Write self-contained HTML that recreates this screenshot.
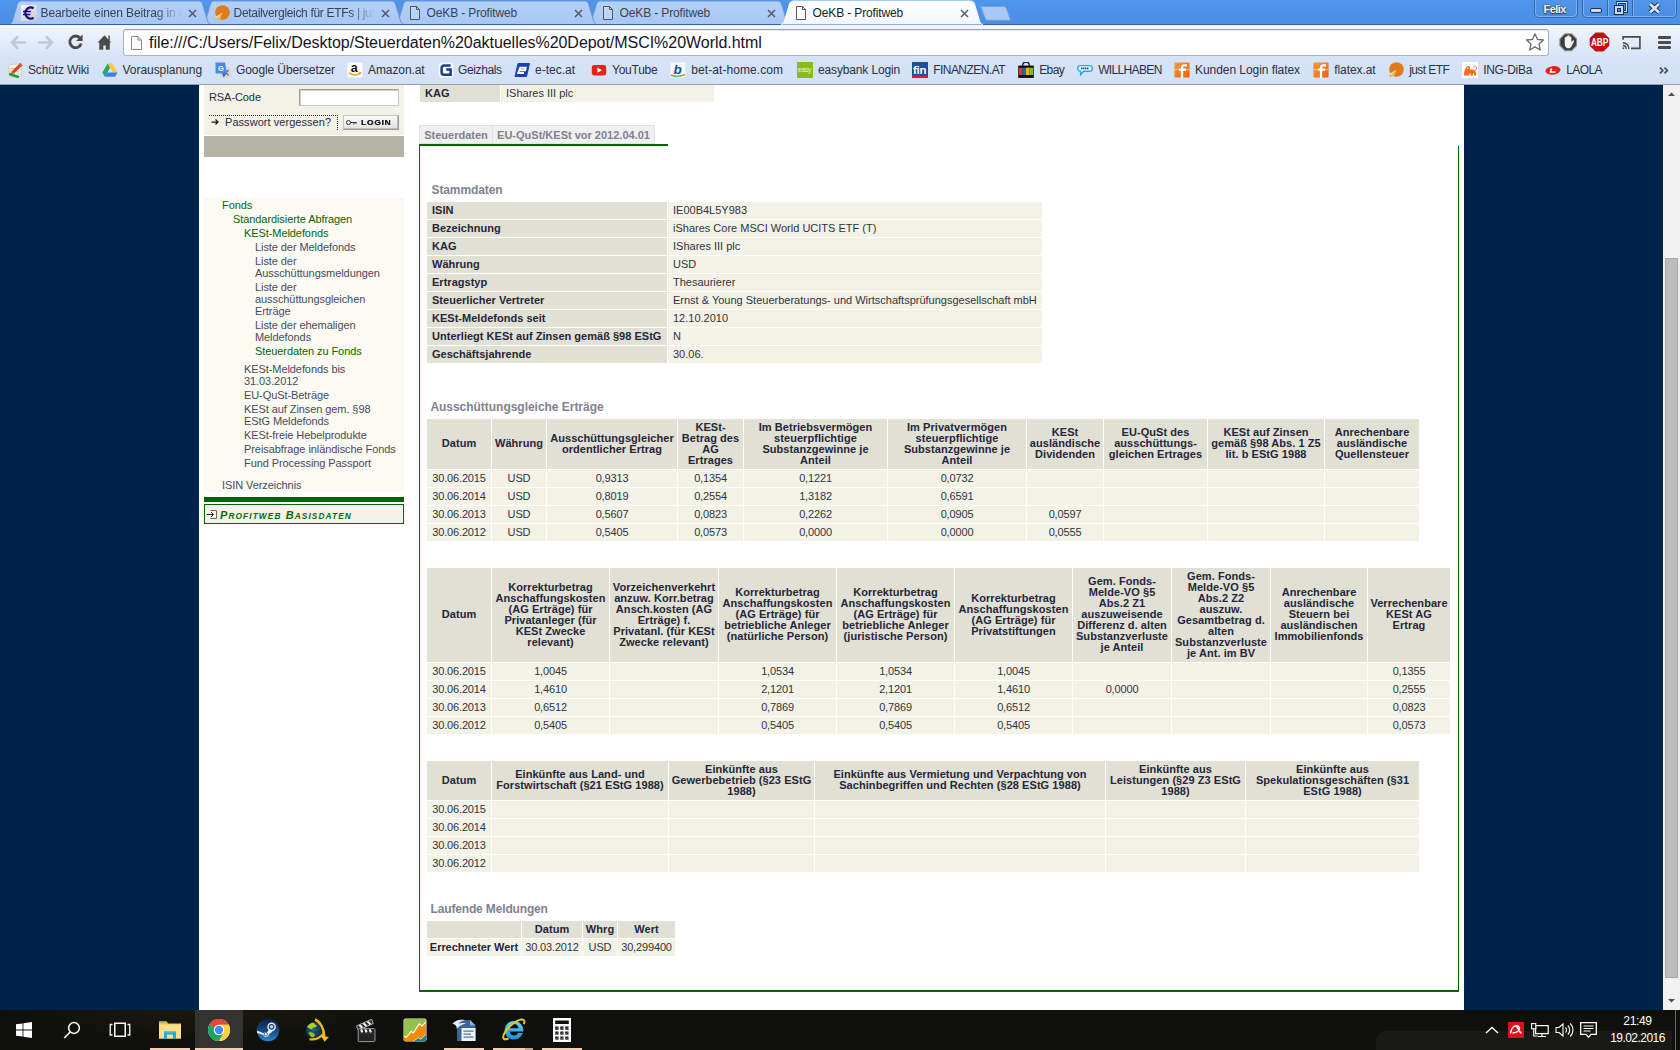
<!DOCTYPE html>
<html lang="de">
<head>
<meta charset="utf-8">
<title>OeKB - Profitweb</title>
<style>
*{box-sizing:border-box;margin:0;padding:0}
html,body{width:1680px;height:1050px;overflow:hidden;background:#00234b;font-family:"Liberation Sans",sans-serif;font-size:11px;color:#26263a}
.abs{position:absolute}
/* ---------- chrome frame ---------- */
#titlebar{position:absolute;left:0;top:0;width:1680px;height:25px;background:linear-gradient(#4f96ec,#4b8ee4)}
#toolbar{position:absolute;left:0;top:25px;width:1680px;height:33px;background:linear-gradient(#f4f8fe 0,#eef3fc 15%,#d6e3f7 100%)}
#bookbar{position:absolute;left:0;top:58px;width:1680px;height:26px;background:linear-gradient(#d6e3f7,#d3e1f6)}
#chromeline{position:absolute;left:0;top:84px;width:1680px;height:1px;background:#9a9da3}
.tab{position:absolute;top:0;height:25px;width:202px}
.tab svg{position:absolute;left:0;top:0}
.tab .tt{position:absolute;left:31.800px;top:6px;font-size:12px;color:#3c4048;white-space:nowrap;overflow:hidden;width:141px}
.tab .fav{position:absolute;left:12.200px;top:5px;width:16px;height:16px}
.tab .x{position:absolute;left:178.900px;top:9px;width:9px;height:9px}
.bm{position:absolute;top:62px;height:18px;font-size:12px;color:#2c3040;white-space:nowrap;letter-spacing:.12px}
.bm .ic{position:absolute;left:0;top:0;width:16px;height:16px}
.bm .tx{position:absolute;left:21px;top:1px}
/* ---------- page ---------- */
#page{position:absolute;left:199px;top:85px;width:1265px;height:925px;background:#fff;overflow:hidden}
#scroll{position:absolute;left:1663px;top:85px;width:17px;height:925px;background:#f1f1f1}
#thumb{position:absolute;left:2px;top:173px;width:13px;height:720px;background:#bcbcbc;border:1px solid #a8a8a8}
/* taskbar */
#taskbar{position:absolute;left:0;top:1010px;width:1680px;height:40px;background:#0f100c}
#pg{position:absolute;left:-199px;top:-85px;width:1680px;height:1050px}
.sc{font-size:8.300px}
.tabb{background:#f0f0f0;border:1px solid #e2e2e2;font-size:11px;font-weight:bold;color:#80808f;line-height:18px;text-align:center;white-space:nowrap}
table.t4 td b{letter-spacing:-.05px;color:#26263a}
.u{position:relative;top:-1px}
/* sidebar */
.sb{position:absolute;white-space:nowrap;font-size:11px;line-height:12px;letter-spacing:-.08px}
.g{color:#0a640a}
.d{color:#4a4a5c}
/* content tables */
table.t{position:absolute;border-collapse:separate;border-spacing:1px;table-layout:fixed}
table.t th{background:#e0e0d4;font-weight:bold;font-size:11px;line-height:11px;padding:3px 0;text-align:center;vertical-align:middle;color:#26263a;letter-spacing:.06px}
table.t td{background:#f2f2e6;font-size:11px;line-height:13px;height:17px;padding:0;text-align:center;vertical-align:middle;color:#33333f;white-space:nowrap;letter-spacing:-.15px}
.h2{position:absolute;font-size:12px;font-weight:bold;color:#82828f;white-space:nowrap;line-height:14px;letter-spacing:-.12px}
.kv{position:absolute;height:17px;line-height:17px;font-size:11px;white-space:nowrap;padding-left:5px}
.kv.k{background:#e0e0d4;font-weight:bold;color:#26263a;letter-spacing:.02px}
.kv.v{background:#f2f2e6;color:#33333f}
</style>
</head>
<body>
<svg width="0" height="0" style="position:absolute"><defs><linearGradient id="tgi" x1="0" y1="0" x2="0" y2="1"><stop offset="0" stop-color="#b4d1f8"/><stop offset="1" stop-color="#a6c7f4"/></linearGradient><linearGradient id="tga" x1="0" y1="0" x2="0" y2="1"><stop offset="0" stop-color="#ffffff"/><stop offset="1" stop-color="#f1f6fd"/></linearGradient></defs></svg>
<div id="titlebar"></div>
<div id="toolbar"></div>
<div id="bookbar"></div>
<div id="chromeline"></div>
<div class="abs" style="left:0;top:24px;width:1680px;height:1px;background:#2e62ac;z-index:7"></div>
<div class="tab" style="left:8.8px;z-index:5"><svg width="202" height="25" viewBox="0 0 202 25"><path d="M0,24.5 C2,24.2 2.800,23 3.500,20.800 L8.300,4.600 C9,2.200 10,1 12.400,1 L189.600,1 C192,1 193,2.200 193.700,4.600 L198.500,20.800 C199.200,23 200,24.200 202,24.500 Z" fill="url(#tgi)"/><path d="M0,24.5 C2,24.2 2.800,23 3.500,20.800 L8.300,4.600 C9,2.200 10,1 12.400,1 L189.600,1 C192,1 193,2.200 193.700,4.600 L198.500,20.800 C199.200,23 200,24.200 202,24.500" fill="none" stroke="#6a95d8" stroke-width="1"/></svg><svg class="fav" viewBox="0 0 16 16"><defs><linearGradient id="eg" x1="0" y1="0" x2="1" y2="1"><stop offset="0" stop-color="#f4f4f4"/><stop offset="1" stop-color="#c9c9c9"/></linearGradient></defs><rect width="16" height="16" fill="url(#eg)"/><path d="M12.6 3.4A5.2 5.6 0 1 0 12.6 12.6" fill="none" stroke="#1a0a8c" stroke-width="2.3"/><path d="M2 6.6h8M2 9.4h7.4" stroke="#1a0a8c" stroke-width="1.5"/></svg><div class="tt" style="color:#3b4150;letter-spacing:-0.118px;-webkit-mask-image:linear-gradient(90deg,#000 82%,transparent 100%);mask-image:linear-gradient(90deg,#000 82%,transparent 100%)">Bearbeite einen Beitrag in d</div><svg class="x" viewBox="0 0 9 9"><path d="M1 1l7 7M8 1l-7 7" stroke="#545a66" stroke-width="1.500" fill="none"/></svg></div>
<div class="tab" style="left:201.8px;z-index:4"><svg width="202" height="25" viewBox="0 0 202 25"><path d="M0,24.5 C2,24.2 2.800,23 3.500,20.800 L8.300,4.600 C9,2.200 10,1 12.400,1 L189.600,1 C192,1 193,2.200 193.700,4.600 L198.500,20.800 C199.200,23 200,24.200 202,24.500 Z" fill="url(#tgi)"/><path d="M0,24.5 C2,24.2 2.800,23 3.500,20.800 L8.300,4.600 C9,2.200 10,1 12.400,1 L189.600,1 C192,1 193,2.200 193.700,4.600 L198.500,20.800 C199.200,23 200,24.200 202,24.500" fill="none" stroke="#6a95d8" stroke-width="1"/></svg><svg class="fav" viewBox="0 0 16 16"><circle cx="8.5" cy="7.5" r="7.3" fill="#e07b1a"/><path d="M8.5 7.5L1 13.2L2.2 15.2L6.5 13.5Z" fill="#f6b93a"/><path d="M8.5 7.5L0.6 12.6L3.4 12.4Z" fill="#d7e6f9"/></svg><div class="tt" style="color:#3b4150;letter-spacing:-0.323px;-webkit-mask-image:linear-gradient(90deg,#000 82%,transparent 100%);mask-image:linear-gradient(90deg,#000 82%,transparent 100%)">Detailvergleich für ETFs | jus</div><svg class="x" viewBox="0 0 9 9"><path d="M1 1l7 7M8 1l-7 7" stroke="#545a66" stroke-width="1.500" fill="none"/></svg></div>
<div class="tab" style="left:394.8px;z-index:3"><svg width="202" height="25" viewBox="0 0 202 25"><path d="M0,24.5 C2,24.2 2.800,23 3.500,20.800 L8.300,4.600 C9,2.200 10,1 12.400,1 L189.600,1 C192,1 193,2.200 193.700,4.600 L198.500,20.800 C199.200,23 200,24.200 202,24.500 Z" fill="url(#tgi)"/><path d="M0,24.5 C2,24.2 2.800,23 3.500,20.800 L8.300,4.600 C9,2.200 10,1 12.400,1 L189.600,1 C192,1 193,2.200 193.700,4.600 L198.500,20.800 C199.200,23 200,24.200 202,24.500" fill="none" stroke="#6a95d8" stroke-width="1"/></svg><svg class="fav" viewBox="0 0 16 16"><path d="M3.500 1.500h6l3 3v10h-9z" fill="rgba(255,255,255,.18)" stroke="#555" stroke-width="1"/><path d="M9.500 1.500v3h3" fill="none" stroke="#555" stroke-width="1"/></svg><div class="tt" style="color:#3b4150;letter-spacing:-0.142px">OeKB - Profitweb</div><svg class="x" viewBox="0 0 9 9"><path d="M1 1l7 7M8 1l-7 7" stroke="#545a66" stroke-width="1.500" fill="none"/></svg></div>
<div class="tab" style="left:587.8px;z-index:2"><svg width="202" height="25" viewBox="0 0 202 25"><path d="M0,24.5 C2,24.2 2.800,23 3.500,20.800 L8.300,4.600 C9,2.200 10,1 12.400,1 L189.600,1 C192,1 193,2.200 193.700,4.600 L198.500,20.800 C199.200,23 200,24.200 202,24.500 Z" fill="url(#tgi)"/><path d="M0,24.5 C2,24.2 2.800,23 3.500,20.800 L8.300,4.600 C9,2.200 10,1 12.400,1 L189.600,1 C192,1 193,2.200 193.700,4.600 L198.500,20.800 C199.200,23 200,24.200 202,24.500" fill="none" stroke="#6a95d8" stroke-width="1"/></svg><svg class="fav" viewBox="0 0 16 16"><path d="M3.500 1.500h6l3 3v10h-9z" fill="rgba(255,255,255,.18)" stroke="#555" stroke-width="1"/><path d="M9.500 1.500v3h3" fill="none" stroke="#555" stroke-width="1"/></svg><div class="tt" style="color:#3b4150;letter-spacing:-0.142px">OeKB - Profitweb</div><svg class="x" viewBox="0 0 9 9"><path d="M1 1l7 7M8 1l-7 7" stroke="#545a66" stroke-width="1.500" fill="none"/></svg></div>
<div class="tab" style="left:780.8px;z-index:9"><svg width="202" height="25" viewBox="0 0 202 25"><path d="M0,24.5 C2,24.2 2.800,23 3.500,20.800 L8.300,4.600 C9,2.200 10,1 12.400,1 L189.600,1 C192,1 193,2.200 193.700,4.600 L198.500,20.800 C199.200,23 200,24.200 202,24.500 Z" fill="url(#tga)"/><path d="M0,24.5 C2,24.2 2.800,23 3.500,20.800 L8.300,4.600 C9,2.200 10,1 12.400,1 L189.600,1 C192,1 193,2.200 193.700,4.600 L198.500,20.800 C199.200,23 200,24.200 202,24.500" fill="none" stroke="#f8fbff" stroke-width="1"/></svg><svg class="fav" viewBox="0 0 16 16"><path d="M3.500 1.500h6l3 3v10h-9z" fill="#fff" stroke="#555" stroke-width="1"/><path d="M9.500 1.500v3h3" fill="none" stroke="#555" stroke-width="1"/></svg><div class="tt" style="color:#1c1c1c;letter-spacing:-0.142px">OeKB - Profitweb</div><svg class="x" viewBox="0 0 9 9"><path d="M1 1l7 7M8 1l-7 7" stroke="#545a66" stroke-width="1.500" fill="none"/></svg></div>
<svg class="abs" style="left:979px;top:5px;z-index:3" width="34" height="17" viewBox="0 0 34 17"><path d="M1.500 1.500H24.500c1.600 0 2.400.600 3 2.200L31.500 15.300H9c-1.600 0-2.400-.600-3-2.200z" fill="#a9c9f5" stroke="#6f9fe0" stroke-width="1"/></svg>
<div class="abs" style="left:1535px;top:-1px;width:42px;height:18px;border:1px solid #7db0ee;border-radius:0 0 4px 4px;background:linear-gradient(#5397ec,#4a8fe4);box-shadow:0 0 0 1px #3367ad"></div>
<div class="abs" style="left:1543.5px;top:3px;font-size:11px;line-height:12px;font-weight:bold;color:#f4f4f4;text-shadow:0 0 2px #222,0 1px 1px #333;letter-spacing:-.55px">Felix</div>
<div class="abs" style="left:1583px;top:-1px;width:93px;height:18px;border:1px solid #7db0ee;border-radius:0 0 4px 4px;background:linear-gradient(#5397ec,#4a8fe4);box-shadow:0 0 0 1px #3367ad"></div>
<div class="abs" style="left:1608px;top:0;width:1px;height:16px;background:#7db0ee;box-shadow:-1px 0 0 #3367ad"></div>
<div class="abs" style="left:1633px;top:0;width:1px;height:16px;background:#7db0ee;box-shadow:-1px 0 0 #3367ad"></div>
<svg class="abs" style="left:1589px;top:7px" width="14" height="7" viewBox="0 0 14 7"><rect x="1.500" y="1.500" width="11" height="4" rx="1.500" fill="#c5dbf8" stroke="#22324e" stroke-width="1"/></svg>
<svg class="abs" style="left:1613px;top:1px" width="15" height="15" viewBox="0 0 15 15"><path d="M4.500 4.500V1.500h9v9h-3" fill="none" stroke="#22324e" stroke-width="3"/><path d="M4.500 4.500V1.500h9v9h-3" fill="none" stroke="#c5dbf8" stroke-width="1.200"/><rect x="1.500" y="4.500" width="9" height="9" fill="#c5dbf8" stroke="#22324e" stroke-width="1"/><rect x="4.500" y="7.500" width="3" height="3" fill="#4a8fe2" stroke="#22324e" stroke-width="1"/></svg>
<svg class="abs" style="left:1648px;top:2px" width="13" height="12" viewBox="0 0 13 12"><path d="M2 2l9 8.500M11 2l-9 8.500" stroke="#22324e" stroke-width="4.600" fill="none"/><path d="M2 2l9 8.500M11 2l-9 8.500" stroke="#d2e3fa" stroke-width="2.700" fill="none"/></svg>
<svg class="abs" style="left:9px;top:34px" width="18" height="16" viewBox="0 0 18 16"><path d="M8.300 3L3 8.500l5.300 5.500M3.500 8.500H15.500" fill="none" stroke="#c2c9d6" stroke-width="2.600" stroke-linecap="round" stroke-linejoin="round"/></svg>
<svg class="abs" style="left:37px;top:34px" width="18" height="16" viewBox="0 0 18 16"><path d="M9.700 3L15 8.500l-5.300 5.500M14.500 8.500H2.500" fill="none" stroke="#c2c9d6" stroke-width="2.600" stroke-linecap="round" stroke-linejoin="round"/></svg>
<svg class="abs" style="left:67px;top:34px" width="17" height="16" viewBox="0 0 17 16"><path d="M13.200 4.200A5.800 5.800 0 1 0 14.200 9.500" fill="none" stroke="#4b4b4b" stroke-width="2.800"/><path d="M9 7h6.600V0.400z" fill="#4b4b4b"/></svg>
<svg class="abs" style="left:97px;top:35px" width="15" height="15" viewBox="0 0 15 15"><path d="M7.500 0.300L0.600 7.600H2.300V14.800H6.300V10.400H8.800V14.800H12.800V7.600H14.400L12.800 5.900V0.600H11.400V4.400z" fill="#4b4b4b"/></svg>
<div class="abs" style="left:123px;top:29px;width:1426px;height:27px;background:#fff;border:1px solid #a9b3c3;border-top-color:#9aa3b3;border-radius:3px;box-shadow:inset 0 1px 1px #e4e7ec"></div>
<svg class="abs" style="left:130px;top:35px" width="13" height="16" viewBox="0 0 13 16"><path d="M1.500 1.500h6.500l3.500 3.500v9.500h-10z" fill="#fbfbfb" stroke="#8a8a8a" stroke-width="1"/><path d="M8 1.500v3.500h3.500" fill="#e4e4e4" stroke="#8a8a8a" stroke-width="1"/></svg>
<div class="abs" id="url" style="left:149px;top:33px;font-size:16px;line-height:19px;color:#14141e;white-space:nowrap;letter-spacing:-.04px">file:///C:/Users/Felix/Desktop/Steuerdaten%20aktuelles%20Depot/MSCI%20World.html</div>
<svg class="abs" style="left:1525px;top:32px" width="20" height="20" viewBox="0 0 20 20"><path d="M10 1.800l2.500 5.600 6 .600-4.500 4 1.300 6L10 14.900 4.700 18l1.300-6-4.500-4 6-.600z" fill="#fff" stroke="#6a6a6a" stroke-width="1.300" stroke-linejoin="round"/></svg>
<svg class="abs" style="left:1558.500px;top:33px" width="18.500" height="18.500" viewBox="0 0 20 20"><path d="M6.400 1h7.200l5.400 5.400v7.200l-5.400 5.400H6.400l-5.400-5.400V6.400z" fill="#3c3c3c" stroke="#8c8c8c" stroke-width="1.200"/><path d="M6.200 10.500V5.200a.9.900 0 0 1 1.800 0V4a.9.900 0 0 1 1.800 0v-.6a.9.900 0 0 1 1.800 0V4.600a.9.900 0 0 1 1.800 0V10l1.200-1.600a.9.900 0 0 1 1.500 1L13.400 14.500c-.8 1.300-1.800 2-3.400 2-2.400 0-3.800-1.800-3.800-4z" fill="#f2f2f2"/></svg>
<svg class="abs" style="left:1589px;top:32px" width="21" height="20" viewBox="0 0 21 20"><path d="M6.500 0.500h8l5.800 5.800v7.400l-5.800 5.800h-8L0.700 13.700V6.300z" fill="#c70d14"/><text transform="translate(10.500 13.700) scale(.8 1)" text-anchor="middle" font-family="Liberation Sans" font-weight="bold" font-size="10.400" fill="#fff" letter-spacing="-0.2">ABP</text></svg>
<svg class="abs" style="left:1622px;top:35.500px" width="19" height="14" viewBox="0 0 21 15" preserveAspectRatio="none"><path d="M1.200 4V1h18.600v12.200H10" fill="none" stroke="#4b4b4b" stroke-width="1.800"/><path d="M1 7.200a6.600 6.600 0 0 1 6.600 6.600M1 10.200a3.600 3.600 0 0 1 3.600 3.600" fill="none" stroke="#4b4b4b" stroke-width="1.500"/><rect x="0.600" y="12.200" width="1.800" height="1.800" fill="#4b4b4b"/></svg>
<div class="abs" style="left:1658px;top:36px;width:13px;height:3px;background:#4b4b4b;border-radius:1px;box-shadow:0 5px 0 #4b4b4b,0 10px 0 #4b4b4b"></div>
<div class="bm" style="left:7px"><span class="ic"><svg width="16" height="16" viewBox="0 0 16 16"><path d="M1.500 3.500c2-1.500 9-2 12.500-.500l.500 11c-3.500 1.500-9 1.500-12 .5z" fill="#f3efe2" stroke="#cfc8b4" stroke-width=".9"/><path d="M3 6.500h5M3 8.800h3.500M9.500 9.500l3 .5M10 12l2.500.3" stroke="#9ccf9c" stroke-width=".8"/><path d="M4.800 9.200L13.300 1l2.200 2.200L7 11.400z" fill="#d8402a"/><path d="M13.300 1l2.200 2.200-1.200 1.100-2.200-2.200z" fill="#c9761f"/><path d="M4.800 9.200L3.600 12.200 7 11.400z" fill="#e8452f"/><path d="M3.300 12.200l7.400 2.600" stroke="#1fa031" stroke-width="2.600" stroke-linecap="round"/></svg></span><span class="tx" style="left:21px;letter-spacing:-0.152px">Schütz Wiki</span></div>
<div class="bm" style="left:102px"><span class="ic"><svg width="16" height="16" viewBox="0 0 16 16"><path d="M5.6 1.5h4.8L15.6 10.5h-4.8z" fill="#f9c941"/><path d="M5.6 1.5L0.4 10.5l2.4 4.2L8 5.7z" fill="#2ba563"/><path d="M5.2 10.5h10.4l-2.4 4.2H2.8z" fill="#3f7fe6"/></svg></span><span class="tx" style="left:20.5px;letter-spacing:-0.043px">Vorausplanung</span></div>
<div class="bm" style="left:215px"><span class="ic"><svg width="16" height="16" viewBox="0 0 16 16"><rect x="6" y="5" width="10" height="11" rx="1" fill="#d9d9d9"/><path d="M9 8l4.5 5.5M13.5 8L9 13.5" stroke="#6a6a6a" stroke-width="1.2"/><path d="M0.5 0.5h9.5l2 11H1.5a1 1 0 0 1-1-1z" fill="#4a86ee"/><path d="M11 11.5l-2.2 4L7 11.5z" fill="#2f63c0"/><text x="3" y="8.8" font-family="Liberation Sans" font-weight="bold" font-size="7.5" fill="#fff">G</text></svg></span><span class="tx" style="left:21px;letter-spacing:-0.1px">Google Übersetzer</span></div>
<div class="bm" style="left:347px"><span class="ic"><svg width="16" height="16" viewBox="0 0 16 16"><rect x="0.5" y="0.5" width="15" height="15" rx="2.5" fill="#fff"/><text x="3.800" y="9.800" font-family="Liberation Sans" font-weight="bold" font-size="12.500" fill="#141414">a</text><path d="M1.800 10.800Q8 15.200 13.400 11.200" fill="none" stroke="#f79a1c" stroke-width="1.500"/><path d="M14.400 10l-2.800.3 2.400 2.200z" fill="#f79a1c"/></svg></span><span class="tx" style="left:21px;letter-spacing:-0.094px">Amazon.at</span></div>
<div class="bm" style="left:438px"><span class="ic"><svg width="16" height="16" viewBox="0 0 16 16"><rect x="0.5" y="0.5" width="15" height="15" rx="3.5" fill="#f4f7fc"/><path d="M12.6 3.4H6.2a2.6 2.6 0 0 0-2.6 2.6v4.2a2.6 2.6 0 0 0 2.6 2.6h6.4V7.4H8.2" fill="none" stroke="#1c3f86" stroke-width="2.5"/></svg></span><span class="tx" style="left:20px;letter-spacing:-0.373px">Geizhals</span></div>
<div class="bm" style="left:514px"><span class="ic"><svg width="16" height="16" viewBox="0 0 16 16"><path d="M4 1.5h11.5l-3 13H1z" fill="#1f3fb0" stroke="#1f3fb0" stroke-width="1" stroke-linejoin="round"/><path d="M4.6 8.2h6.6l.5-2.4H6.2L4.2 11h5.8" fill="none" stroke="#fff" stroke-width="1.9"/></svg></span><span class="tx" style="left:21px;letter-spacing:0.0px">e-tec.at</span></div>
<div class="bm" style="left:591px"><span class="ic"><svg width="16" height="16" viewBox="0 0 16 16"><rect x="0.8" y="3" width="14.4" height="10.4" rx="2.6" fill="#e62117"/><path d="M6.4 5.6v5.2L11 8.2z" fill="#fff"/></svg></span><span class="tx" style="left:21px;letter-spacing:-0.237px">YouTube</span></div>
<div class="bm" style="left:670px"><span class="ic"><svg width="16" height="16" viewBox="0 0 16 16"><rect x="0.5" y="0.5" width="15" height="15" rx="1" fill="#f7f7f5"/><text x="3.6" y="11.6" font-family="Liberation Sans" font-weight="bold" font-style="italic" font-size="13.5" fill="#17518f">b</text><path d="M1 13.2Q8 15.8 15 12.6" fill="none" stroke="#5aa82e" stroke-width="1.3"/></svg></span><span class="tx" style="left:21.200000000000045px;letter-spacing:0.087px">bet-at-home.com</span></div>
<div class="bm" style="left:797px"><span class="ic"><svg width="16" height="16" viewBox="0 0 16 16"><rect x="0" y="0" width="16" height="16" fill="#86bc1f"/><text x="1.1" y="9.6" font-family="Liberation Sans" font-size="6.6" fill="#f2fbdc" letter-spacing="-0.2">easy</text></svg></span><span class="tx" style="left:21px;letter-spacing:-0.146px">easybank Login</span></div>
<div class="bm" style="left:912px"><span class="ic"><svg width="16" height="16" viewBox="0 0 16 16"><rect x="0" y="0" width="16" height="16" fill="#1d4c9a"/><rect x="0" y="13.3" width="16" height="2.7" fill="#d3202c"/><text x="1" y="11.6" font-family="Liberation Sans" font-weight="bold" font-size="11.5" fill="#fff" letter-spacing="-0.3">fin</text></svg></span><span class="tx" style="left:21.200000000000045px;letter-spacing:-0.542px">FINANZEN.AT</span></div>
<div class="bm" style="left:1018px"><span class="ic"><svg width="16" height="16" viewBox="0 0 16 16"><path d="M4.700 4V3.400a3.300 3.300 0 0 1 6.600 0V4" fill="none" stroke="#141414" stroke-width="1.300"/><rect x="0.200" y="3.600" width="15.600" height="12.300" fill="#0c0c0c"/><rect x="0.800" y="5.700" width="3.600" height="7.300" fill="#e5332a"/><rect x="4.400" y="5.700" width="3.600" height="7.300" fill="#1c62d4"/><rect x="8" y="5.700" width="3.600" height="7.300" fill="#f9b218"/><rect x="11.600" y="5.700" width="3.600" height="7.300" fill="#82ba2a"/></svg></span><span class="tx" style="left:21.200000000000045px;letter-spacing:-0.586px">Ebay</span></div>
<div class="bm" style="left:1077px"><span class="ic"><svg width="16" height="16" viewBox="0 0 16 16"><path d="M3.4 3.6h9.2a2.6 2.6 0 0 1 0 5.6H6.6L3.6 12.6V9.2H3.4a2.6 2.6 0 0 1 0-5.6z" fill="#f2f8fd" stroke="#2aa6e2" stroke-width="1.4"/><path d="M4 6.4h8" stroke="#2a3f86" stroke-width="1.7" stroke-dasharray="1.4 .5"/></svg></span><span class="tx" style="left:21.200000000000045px;letter-spacing:-0.649px">WILLHABEN</span></div>
<div class="bm" style="left:1174px"><span class="ic"><svg width="16" height="16" viewBox="0 0 16 16"><defs><linearGradient id="fx" x1="0" y1="0" x2="1" y2="1"><stop offset="0" stop-color="#f79a3c"/><stop offset="1" stop-color="#ef5d10"/></linearGradient></defs><rect x="0.4" y="0.4" width="15.2" height="15.2" rx="1" fill="url(#fx)"/><path d="M0.6 7.6H15" stroke="#fbd3a8" stroke-width=".8"/><path d="M13 3.4H10a2 2 0 0 0-2 2V16M5 7.6h7" fill="none" stroke="#fff" stroke-width="2.3"/></svg></span><span class="tx" style="left:21px;letter-spacing:-0.055px">Kunden Login flatex</span></div>
<div class="bm" style="left:1313px"><span class="ic"><svg width="16" height="16" viewBox="0 0 16 16"><defs><linearGradient id="fx" x1="0" y1="0" x2="1" y2="1"><stop offset="0" stop-color="#f79a3c"/><stop offset="1" stop-color="#ef5d10"/></linearGradient></defs><rect x="0.4" y="0.4" width="15.2" height="15.2" rx="1" fill="url(#fx)"/><path d="M0.6 7.6H15" stroke="#fbd3a8" stroke-width=".8"/><path d="M13 3.4H10a2 2 0 0 0-2 2V16M5 7.6h7" fill="none" stroke="#fff" stroke-width="2.3"/></svg></span><span class="tx" style="left:21.200000000000045px;letter-spacing:-0.078px">flatex.at</span></div>
<div class="bm" style="left:1387.5px"><span class="ic"><svg class="" viewBox="0 0 16 16"><circle cx="8.5" cy="7.5" r="7.3" fill="#e07b1a"/><path d="M8.5 7.5L1 13.2L2.2 15.2L6.5 13.5Z" fill="#f6b93a"/><path d="M8.5 7.5L0.6 12.6L3.4 12.4Z" fill="#d7e6f9"/></svg></span><span class="tx" style="left:21.700000000000045px;letter-spacing:-0.582px">just ETF</span></div>
<div class="bm" style="left:1462px"><span class="ic"><svg width="16" height="16" viewBox="0 0 16 16"><rect width="16" height="16" fill="#fff"/><path d="M2 13.6c0-3 .4-5.2 1.4-6.8C4 5 5.6 3.6 7 4.2c1.4.6 1.4 2.4.8 3.4 1.6-.4 3.8-.2 5 .8 1.2 1 1.6 3 1.4 5.2h-2.2c.2-1.2 0-2.2-.6-2.8-.4 1-.6 1.800-.6 2.800H8.600c0-1.200-.2-2-.8-2.600-.4.800-.6 1.600-.6 2.600z" fill="#f36f1c"/><path d="M11.600 4.200c1.400-.4 2.600.4 2.800 1.800.2 1.200-.4 2-1.200 2.400" fill="none" stroke="#f36f1c" stroke-width="1"/><circle cx="5.800" cy="6.200" r=".7" fill="#fff"/></svg></span><span class="tx" style="left:21.200000000000045px;letter-spacing:-0.318px">ING-DiBa</span></div>
<div class="bm" style="left:1545px"><span class="ic"><svg width="16" height="16" viewBox="0 0 16 16"><ellipse cx="8" cy="8.400" rx="7.600" ry="4.300" fill="#e0261c" transform="rotate(-7 8 8.4)"/><path d="M6.400 6.400L5.600 10h5" fill="none" stroke="#fff" stroke-width="1.700"/></svg></span><span class="tx" style="left:21.200000000000045px;letter-spacing:-0.574px">LAOLA</span></div>
<svg class="abs" style="left:1659px;top:67px" width="10" height="7" viewBox="0 0 10 7"><path d="M1 .7l2.800 2.800L1 6.300M5.500 .7l2.800 2.800L5.500 6.300" fill="none" stroke="#4b4b4b" stroke-width="1.700"/></svg>
<div id="page"><div id="pg">
<div class="abs" style="left:204px;top:85px;width:200px;height:50px;background:#f2f2e6"></div>
<div class="abs" style="left:204px;top:136px;width:200px;height:21px;background:#b3b3a7"></div>
<div class="sb" style="left:209px;top:91px;color:#2a2a48">RSA-Code</div>
<div class="abs" style="left:299px;top:89px;width:100px;height:17px;background:#fff;border:1px solid #9c9c9c;border-right-color:#c8c8c8;border-bottom-color:#c8c8c8;box-shadow:inset 1px 1px 0 #d0d0d0"></div>
<div class="abs" style="left:209px;top:115px;width:129px;height:15px;border-top:1px dotted #333;border-right:1px dotted #333"></div>
<svg class="abs" style="left:211px;top:118px" width="9" height="8" viewBox="0 0 9 8"><path d="M0.5 4h6M4.5 1.5l2.500 2.500-2.500 2.500" fill="none" stroke="#1a1a1a" stroke-width="1.250"/></svg>
<div class="sb" style="left:225px;top:116px;color:#2a2a48;letter-spacing:.05px">Passwort vergessen?</div>
<div class="abs" style="left:343px;top:115px;width:56px;height:15px;background:linear-gradient(#fafafa,#e2e2e2);border:1px solid #9a9a9a;border-top-color:#c4c4c4;border-left-color:#c4c4c4;box-shadow:inset -1px -1px 0 #bdbdbd"></div>
<svg class="abs" style="left:346px;top:119px" width="11" height="7" viewBox="0 0 11 7"><circle cx="2.5" cy="3.5" r="2" fill="none" stroke="#333" stroke-width="1"/><path d="M4.5 3.5h6M8 3.5v2M10 3.5v1.5" stroke="#333" stroke-width="1" fill="none"/></svg>
<div class="abs" style="left:361px;top:118px;font-size:8px;line-height:9px;font-weight:bold;color:#222;letter-spacing:.7px;transform:scaleX(1.050);transform-origin:0 0;text-shadow:.3px 0 0 #222">LOGIN</div>
<div class="abs" style="left:204px;top:198px;width:200px;height:294px;background:#fafaf2"></div>
<div class="sb g" style="left:222px;top:199px">Fonds</div>
<div class="sb g" style="left:233px;top:213px">Standardisierte Abfragen</div>
<div class="sb g" style="left:244px;top:227px">KESt-Meldefonds</div>
<div class="sb d" style="left:255px;top:241px">Liste der Meldefonds</div>
<div class="sb d" style="left:255px;top:255px">Liste der<br>Ausschüttungsmeldungen</div>
<div class="sb d" style="left:255px;top:281px">Liste der<br>ausschüttungsgleichen<br>Erträge</div>
<div class="sb d" style="left:255px;top:319px">Liste der ehemaligen<br>Meldefonds</div>
<div class="sb g" style="left:255px;top:345px">Steuerdaten zu Fonds</div>
<div class="sb d" style="left:244px;top:363px">KESt-Meldefonds bis<br>31.03.2012</div>
<div class="sb d" style="left:244px;top:389px">EU-QuSt-Beträge</div>
<div class="sb d" style="left:244px;top:403px">KESt auf Zinsen gem. §98<br>EStG Meldefonds</div>
<div class="sb d" style="left:244px;top:429px">KESt-freie Hebelprodukte</div>
<div class="sb d" style="left:244px;top:443px">Preisabfrage inländische Fonds</div>
<div class="sb d" style="left:244px;top:457px">Fund Processing Passport</div>
<div class="sb d" style="left:222px;top:479px">ISIN Verzeichnis</div>
<div class="abs" style="left:204px;top:497px;width:200px;height:5px;background:#006400"></div>
<div class="abs" style="left:204px;top:504px;width:200px;height:20px;background:#f2f2e6;border:1px solid #006400"></div>
<svg class="abs" style="left:207px;top:510px" width="10" height="9" viewBox="0 0 10 9"><path d="M3.5 0.5h6v8h-6" fill="none" stroke="#666" stroke-width="1"/><path d="M0 4.5h6M4 2l2.5 2.5L4 7" fill="none" stroke="#222" stroke-width="1"/></svg>
<div class="abs" id="pwb" style="left:220px;top:508px;font-size:11px;line-height:14px;font-weight:bold;font-style:italic;color:#0a6a0a;letter-spacing:1.1px;white-space:nowrap">P<span class="sc">ROFITWEB</span> B<span class="sc">ASISDATEN</span></div>
<div class="kv k" style="left:420px;top:85px;width:80px;padding-left:5px">KAG</div>
<div class="kv v" style="left:501px;top:85px;width:213px;padding-left:5px">IShares III plc</div>
<div class="abs tabb" style="left:419px;top:125px;width:74px;height:19px">Steuerdaten</div>
<div class="abs tabb" style="left:492px;top:125px;width:163px;height:19px">EU-QuSt/KESt vor 2012.04.01</div>
<div class="abs" style="left:419px;top:144px;width:249px;height:2px;background:#006400"></div>
<div class="abs" style="left:419px;top:144px;width:1px;height:848px;background:#006400"></div>
<div class="abs" style="left:1458px;top:146px;width:1px;height:846px;background:#006400"></div>
<div class="abs" style="left:419px;top:990px;width:1040px;height:2px;background:#006400"></div>
<div class="h2" style="left:431.5px;top:183px;letter-spacing:-.1px">Stammdaten</div>
<div class="kv k" style="left:427px;top:202px;width:240px">ISIN</div>
<div class="kv v" style="left:668px;top:202px;width:374px">IE00B4L5Y983</div>
<div class="kv k" style="left:427px;top:220px;width:240px">Bezeichnung</div>
<div class="kv v" style="left:668px;top:220px;width:374px">iShares Core MSCI World UCITS ETF (T)</div>
<div class="kv k" style="left:427px;top:238px;width:240px">KAG</div>
<div class="kv v" style="left:668px;top:238px;width:374px">IShares III plc</div>
<div class="kv k" style="left:427px;top:256px;width:240px">Währung</div>
<div class="kv v" style="left:668px;top:256px;width:374px">USD</div>
<div class="kv k" style="left:427px;top:274px;width:240px">Ertragstyp</div>
<div class="kv v" style="left:668px;top:274px;width:374px">Thesaurierer</div>
<div class="kv k" style="left:427px;top:292px;width:240px">Steuerlicher Vertreter</div>
<div class="kv v" style="left:668px;top:292px;width:374px">Ernst &amp; Young Steuerberatungs- und Wirtschaftsprüfungsgesellschaft mbH</div>
<div class="kv k" style="left:427px;top:310px;width:240px">KESt-Meldefonds seit</div>
<div class="kv v" style="left:668px;top:310px;width:374px">12.10.2010</div>
<div class="kv k" style="left:427px;top:328px;width:240px">Unterliegt KESt auf Zinsen gemäß §98 EStG</div>
<div class="kv v" style="left:668px;top:328px;width:374px">N</div>
<div class="kv k" style="left:427px;top:346px;width:240px">Geschäftsjahrende</div>
<div class="kv v" style="left:668px;top:346px;width:374px">30.06.</div>
<div class="h2" style="left:430.4px;top:400px;letter-spacing:-.03px">Ausschüttungsgleiche Erträge</div>
<table class="t" style="left:426px;top:418px;width:994px"><colgroup><col style="width:64px"><col style="width:54px"><col style="width:130px"><col style="width:65px"><col style="width:143px"><col style="width:138px"><col style="width:76px"><col style="width:103px"><col style="width:116px"><col style="width:94px"></colgroup><tr style="height:50px"><th><div class="u">Datum</div></th><th><div class="u">Währung</div></th><th>Ausschüttungsgleicher<br>ordentlicher Ertrag</th><th>KESt-<br>Betrag des<br>AG<br>Ertrages</th><th>Im Betriebsvermögen<br>steuerpflichtige<br>Substanzgewinne je<br>Anteil</th><th>Im Privatvermögen<br>steuerpflichtige<br>Substanzgewinne je<br>Anteil</th><th><div class="u">KESt<br>ausländische<br>Dividenden</div></th><th><div class="u">EU-QuSt des<br>ausschüttungs-<br>gleichen Ertrages</div></th><th><div class="u">KESt auf Zinsen<br>gemäß §98 Abs. 1 Z5<br>lit. b EStG 1988</div></th><th><div class="u">Anrechenbare<br>ausländische<br>Quellensteuer</div></th></tr><tr><td>30.06.2015</td><td>USD</td><td>0,9313</td><td>0,1354</td><td>0,1221</td><td>0,0732</td><td></td><td></td><td></td><td></td></tr><tr><td>30.06.2014</td><td>USD</td><td>0,8019</td><td>0,2554</td><td>1,3182</td><td>0,6591</td><td></td><td></td><td></td><td></td></tr><tr><td>30.06.2013</td><td>USD</td><td>0,5607</td><td>0,0823</td><td>0,2262</td><td>0,0905</td><td>0,0597</td><td></td><td></td><td></td></tr><tr><td>30.06.2012</td><td>USD</td><td>0,5405</td><td>0,0573</td><td>0,0000</td><td>0,0000</td><td>0,0555</td><td></td><td></td><td></td></tr></table>
<table class="t" style="left:426px;top:567px;width:1025px"><colgroup><col style="width:64px"><col style="width:117px"><col style="width:108px"><col style="width:117px"><col style="width:117px"><col style="width:117px"><col style="width:98px"><col style="width:98px"><col style="width:96px"><col style="width:82px"></colgroup><tr style="height:94px"><th><div class="u">Datum</div></th><th>Korrekturbetrag<br>Anschaffungskosten<br>(AG Erträge) für<br>Privatanleger (für<br>KESt Zwecke<br>relevant)</th><th>Vorzeichenverkehrt<br>anzuw. Korr.betrag<br>Ansch.kosten (AG<br>Erträge) f.<br>Privatanl. (für KESt<br>Zwecke relevant)</th><th><div class="u">Korrekturbetrag<br>Anschaffungskosten<br>(AG Erträge) für<br>betriebliche Anleger<br>(natürliche Person)</div></th><th><div class="u">Korrekturbetrag<br>Anschaffungskosten<br>(AG Erträge) für<br>betriebliche Anleger<br>(juristische Person)</div></th><th>Korrekturbetrag<br>Anschaffungskosten<br>(AG Erträge) für<br>Privatstiftungen</th><th><div class="u">Gem. Fonds-<br>Melde-VO §5<br>Abs.2 Z1<br>auszuweisende<br>Differenz d. alten<br>Substanzverluste<br>je Anteil</div></th><th>Gem. Fonds-<br>Melde-VO §5<br>Abs.2 Z2<br>auszuw.<br>Gesamtbetrag d.<br>alten<br>Substanzverluste<br>je Ant. im BV</th><th><div class="u">Anrechenbare<br>ausländische<br>Steuern bei<br>ausländischen<br>Immobilienfonds</div></th><th><div class="u">Verrechenbare<br>KESt AG<br>Ertrag</div></th></tr><tr><td>30.06.2015</td><td>1,0045</td><td></td><td>1,0534</td><td>1,0534</td><td>1,0045</td><td></td><td></td><td></td><td>0,1355</td></tr><tr><td>30.06.2014</td><td>1,4610</td><td></td><td>2,1201</td><td>2,1201</td><td>1,4610</td><td>0,0000</td><td></td><td></td><td>0,2555</td></tr><tr><td>30.06.2013</td><td>0,6512</td><td></td><td>0,7869</td><td>0,7869</td><td>0,6512</td><td></td><td></td><td></td><td>0,0823</td></tr><tr><td>30.06.2012</td><td>0,5405</td><td></td><td>0,5405</td><td>0,5405</td><td>0,5405</td><td></td><td></td><td></td><td>0,0573</td></tr></table>
<table class="t" style="left:426px;top:760px;width:994px"><colgroup><col style="width:64px"><col style="width:176px"><col style="width:145px"><col style="width:290px"><col style="width:139px"><col style="width:173px"></colgroup><tr style="height:39px"><th>Datum</th><th><div class="u">Einkünfte aus Land- und<br>Forstwirtschaft (§21 EStG 1988)</div></th><th>Einkünfte aus<br>Gewerbebetrieb (§23 EStG<br>1988)</th><th><div class="u">Einkünfte aus Vermietung und Verpachtung von<br>Sachinbegriffen und Rechten (§28 EStG 1988)</div></th><th>Einkünfte aus<br>Leistungen (§29 Z3 EStG<br>1988)</th><th>Einkünfte aus<br>Spekulationsgeschäften (§31<br>EStG 1988)</th></tr><tr><td>30.06.2015</td><td></td><td></td><td></td><td></td><td></td></tr><tr><td>30.06.2014</td><td></td><td></td><td></td><td></td><td></td></tr><tr><td>30.06.2013</td><td></td><td></td><td></td><td></td><td></td></tr><tr><td>30.06.2012</td><td></td><td></td><td></td><td></td><td></td></tr></table>
<div class="h2" style="left:430.5px;top:902px;letter-spacing:-.15px">Laufende Meldungen</div>
<table class="t t4" style="left:426px;top:920px;width:250px"><colgroup><col style="width:94px"><col style="width:60px"><col style="width:34px"><col style="width:57px"></colgroup><tr style="height:17px"><th></th><th>Datum</th><th>Whrg</th><th>Wert</th></tr><tr><td><b>Errechneter Wert</b></td><td>30.03.2012</td><td>USD</td><td>30,299400</td></tr></table>
</div></div>
<div id="scroll"><div id="thumb"></div><svg class="abs" style="left:5px;top:7px" width="7" height="4" viewBox="0 0 9 5"><path d="M0 5L4.500 0.500 9 5z" fill="#505050"/></svg><svg class="abs" style="left:5px;top:914px" width="7" height="4" viewBox="0 0 9 5"><path d="M0 0L4.500 4.500 9 0z" fill="#505050"/></svg></div>
<div id="taskbar">
<div class="abs" style="left:0;top:0;width:1680px;height:40px;background:radial-gradient(ellipse 300px 50px at 200px 0px,rgba(60,45,25,.28),transparent 70%)"></div>
<div class="abs" style="left:1376px;top:21px;width:296px;height:19px;background:rgba(255,255,255,.045);border-radius:9px 0 0 0"></div>
<svg class="abs" style="left:16px;top:12px" width="16" height="16" viewBox="0 0 16 16"><path d="M0 2.300L6.600 1.400V7.600H0zM7.400 1.300L16 0V7.600H7.400zM0 8.400H6.600V14.600L0 13.700zM7.400 8.400H16V16L7.400 14.700z" fill="#fff"/></svg>
<svg class="abs" style="left:62px;top:10px" width="20" height="20" viewBox="0 0 20 20"><circle cx="12" cy="8" r="5.400" fill="none" stroke="#fff" stroke-width="1.500"/><path d="M8.200 12L2.200 18" stroke="#fff" stroke-width="1.700"/></svg>
<svg class="abs" style="left:109px;top:12px" width="22" height="16" viewBox="0 0 22 16"><rect x="5.750" y="1.250" width="10.500" height="13" fill="none" stroke="#fff" stroke-width="1.500"/><path d="M3.500 2.500H1.250v10.500H3.500M18.500 2.500h2.250v10.500H18.500" fill="none" stroke="#fff" stroke-width="1.300"/></svg>
<svg class="abs" style="left:158px;top:9px" width="24" height="21" viewBox="0 0 24 21"><path d="M1 2.500h7.500l1.500 2H23v15H1z" fill="#f5c84b"/><path d="M1 5.500h22v14H1z" fill="#fbe08a"/><path d="M1 2.500h7.500l1.500 2H1z" fill="#e8b52f"/><path d="M2 3.200h3" stroke="#4fc3f7" stroke-width="1"/><path d="M6 12h12v8h-3v-4.500H9V20H6z" fill="#21a5ee"/><path d="M6 12h12v1.500H6z" fill="#51c0f6"/></svg>
<div class="abs" style="left:150px;top:38px;width:40px;height:2px;background:#f6cdb1"></div>
<div class="abs" style="left:195px;top:0;width:48px;height:40px;background:#33342f"></div>
<div class="abs" style="left:195px;top:38px;width:48px;height:2px;background:#f6cdb1"></div>
<svg class="abs" style="left:207px;top:8px" width="24" height="24" viewBox="0 0 24 24"><circle cx="12" cy="12" r="11" fill="#fff"/><path d="M12 12L2.470 6.500A11 11 0 0 1 21.530 6.500z" fill="#de4c3c"/><path d="M2.470 6.500A11 11 0 0 0 12 23L17 14.800 12 12z" fill="#1da463"/><path d="M2.470 6.500L7.400 14.800 12 12z" fill="#1da463"/><path d="M21.530 6.500A11 11 0 0 1 12 23L16.700 14.700 12 6.500z" fill="#fdd03f"/><path d="M12 6.500H21.530L16.700 14.700z" fill="#fdd03f"/><path d="M12 12L2.470 6.500A11 11 0 0 1 21.530 6.500H12z" fill="#de4c3c"/><circle cx="12" cy="12" r="5.300" fill="#fff"/><circle cx="12" cy="12" r="4.200" fill="#4a8af4"/></svg>
<svg class="abs" style="left:256px;top:8px" width="24" height="24" viewBox="0 0 24 24"><defs><linearGradient id="stm" x1="0" y1="0" x2="0" y2="1"><stop offset="0" stop-color="#0f1e46"/><stop offset=".6" stop-color="#1a4f8a"/><stop offset="1" stop-color="#2b8bd0"/></linearGradient></defs><circle cx="12" cy="12" r="11.300" fill="url(#stm)"/><circle cx="15.600" cy="8.800" r="3.600" fill="none" stroke="#e8eef6" stroke-width="1.500"/><circle cx="15.600" cy="8.800" r="1.700" fill="#c9d4e2"/><path d="M1 12.500l6.500 2.800a2.800 2.800 0 0 1 3.200-.9l3-3.500 3 2.600-3.800 2.700a2.900 2.900 0 0 1-5.700.8L1.200 15z" fill="#eef2f8"/><circle cx="9.800" cy="16.300" r="1.700" fill="none" stroke="#1a4f8a" stroke-width=".8"/></svg>
<svg class="abs" style="left:304px;top:8px" width="25" height="24" viewBox="0 0 25 24"><defs><radialGradient id="gl" cx=".45" cy=".4" r=".6"><stop offset="0" stop-color="#27678a"/><stop offset="1" stop-color="#0b2433"/></radialGradient></defs><circle cx="10" cy="12.600" r="8.400" fill="url(#gl)"/><path d="M3 9c1.500-2.500 4-4.500 6.500-4.300 1.500.3 1 1.800 2.200 2 1.200.3 1.300 1.500.2 2.200-1.300.600-2.800.2-3.400 1.500-.6 1.300-2.300.8-3.300-.2C4 9.500 3.300 9.600 3 9z" fill="#a9d21c"/><path d="M4.500 14.500c2-.600 4.500 0 6 1.500 1 1.200 0 2.800-1.500 3.300-1.800.2-3.600-1.500-4.500-4.800z" fill="#93c01c"/><path d="M11 1.500c5.500 2.500 9 9.500 9.300 17.500" fill="none" stroke="#f2b40f" stroke-width="2.600"/><path d="M5.500 21.200c5 1 10-.8 14.500-6" fill="none" stroke="#f2b40f" stroke-width="2.200"/><path d="M16.800 17.800l8 1.300-4.200 4.700z" fill="#f6c21a"/></svg>
<svg class="abs" style="left:356px;top:7px" width="22" height="26" viewBox="0 0 22 26"><g transform="translate(0 1.800) rotate(-24 3 11)"><rect x="2.200" y="6.400" width="16.500" height="4.600" rx=".8" fill="#2a2a2a" stroke="#b9b9b9" stroke-width=".9"/><path d="M5.300 6.900l1.600 3.600M9.700 6.900l1.600 3.600M14.100 6.900l1.600 3.600" stroke="#f4f4f4" stroke-width="2.100"/></g><rect x="2.200" y="11.600" width="16.800" height="13" rx="1.200" fill="#222" stroke="#a9a9a9" stroke-width=".9"/><path d="M5 12.300l1.400 3.200M9.300 12.300l1.400 3.200M13.600 12.300l1.400 3.200" stroke="#f1f1f1" stroke-width="2.100"/><path d="M2.800 16.200h15.600" stroke="#3a3a3a" stroke-width="1"/></svg>
<svg class="abs" style="left:403px;top:8px" width="24" height="24" viewBox="0 0 24 24"><defs><clipPath id="cc"><rect x="1" y="1" width="22" height="22" rx="1.500"/></clipPath></defs><rect x=".5" y=".5" width="23" height="23" rx="2" fill="#e9ede0"/><g clip-path="url(#cc)"><rect x="1" y="1" width="22" height="22" fill="#96c24a"/><path d="M0 17.500l3.300 2 5-6.200 2.100 1.700 5.900-9.400 2.600 2.500 4.600-4.600V24H0z" fill="#f28c00" stroke="#fff" stroke-width="1.100" stroke-linejoin="round"/><path d="M9 24l6.500-4.300 2.500 1.700 5.500-5.800V24z" fill="#1a7f9f" stroke="#fff" stroke-width=".6"/></g></svg>
<svg class="abs" style="left:452px;top:8px" width="24" height="24" viewBox="0 0 24 24"><path d="M5 2h13l5.500 5.500V23H5z" fill="#3c6596"/><path d="M18 2l5.500 5.500H18z" fill="#8fb0d8"/><path d="M9.500 10h14v13h-14z" fill="#eef2f7"/><path d="M11.500 13.200h10M11.500 16.200h7.500M11.500 19.200h10" stroke="#4a78b0" stroke-width="1.300"/><path d="M0.500 5.500C3.500 2.500 8 1 13 2.300 10 2.800 7.800 4 6.300 5.800 8.500 5 11 4.800 14 5.500 10 6.300 7 8 4.500 11c.6-2 .2-3.800-4-5.500z" fill="#e8eef6"/></svg>
<div class="abs" style="left:444px;top:38px;width:40px;height:2px;background:#f6cdb1"></div>
<svg class="abs" style="left:501px;top:7px" width="25" height="25" viewBox="0 0 25 25"><defs><linearGradient id="ie" x1="0" y1="0" x2="0" y2="1"><stop offset="0" stop-color="#5fd0fa"/><stop offset="1" stop-color="#1c8fdc"/></linearGradient></defs><path d="M13 4a9.300 9.300 0 0 1 9.300 10.500H8.600a4.500 4.500 0 0 0 8.500 1.500h4.700A9.300 9.300 0 1 1 13 4zm-4.400 7.300h8.800a4.400 4.400 0 0 0-8.800 0z" fill="url(#ie)"/><path d="M22.800 7.200c1.300-3 .6-5.300-2.800-4.600C15 3.600 6.500 10 3.200 16.600c-2.100 4.400-.6 7.200 4.300 4.900" fill="none" stroke="#f4c21a" stroke-width="2"/></svg>
<div class="abs" style="left:493px;top:38px;width:40px;height:2px;background:#f6cdb1"></div>
<div class="abs" style="left:525px;top:38px;width:8px;height:2px;background:#c9a58d"></div>
<svg class="abs" style="left:553px;top:8px" width="18" height="24" viewBox="0 0 18 24"><rect width="18" height="24" fill="#fff"/><rect x="2.200" y="2.500" width="13.600" height="3.500" fill="#0f100c"/><g fill="#0f100c"><path d="M2.300 8.600h3.300l-3.300 3.300zM7.300 8.600h3.300l-3.300 3.300zM12.300 8.600h3.300l-3.300 3.300zM2.300 13.500h3.300l-3.300 3.300zM7.300 13.500h3.300l-3.300 3.300zM12.300 13.500h3.300l-3.300 3.300zM2.300 18.400h3.300l-3.300 3.300zM7.300 18.400h3.300l-3.300 3.300zM12.300 18.400h3.300l-3.300 3.300z"/><path d="M5.600 8.600v3.300H2.300zM10.600 8.600v3.300H7.300zM15.600 8.600v3.300h-3.300zM5.600 13.500v3.300H2.300zM10.600 13.500v3.300H7.300zM15.600 13.500v3.300h-3.300zM5.600 18.400v3.300H2.300zM10.600 18.400v3.300H7.300zM15.600 18.400v3.300h-3.300z" opacity=".82"/></g></svg>
<div class="abs" style="left:542px;top:38px;width:40px;height:2px;background:#f6cdb1"></div>
<svg class="abs" style="left:1485px;top:16px" width="14" height="8" viewBox="0 0 14 8"><path d="M1 7l6-5.500L13 7" fill="none" stroke="#fff" stroke-width="1.400"/></svg>
<svg class="abs" style="left:1508px;top:12px" width="16" height="16" viewBox="0 0 16 16"><rect width="16" height="16" fill="#e0101e"/><path d="M2.500 11.500C3 7 5.500 3.800 8.500 3.800c3 0 4 3 2 5s-5 2.200-6 2.200M8.500 3.800c1.500 3 2.500 6 5 7.700" fill="none" stroke="#fff" stroke-width="1.500"/></svg>
<svg class="abs" style="left:1531px;top:13px" width="18" height="15" viewBox="0 0 18 15"><rect x="4.600" y="2.600" width="12.600" height="8" fill="none" stroke="#fff" stroke-width="1.200"/><path d="M10.900 10.600v2.500M7 13.500h8" stroke="#fff" stroke-width="1.200"/><rect x=".6" y=".6" width="4.200" height="5.200" fill="#15140f" stroke="#fff" stroke-width="1.100"/><path d="M2.700 5.800V13h4" fill="none" stroke="#fff" stroke-width="1.100"/></svg>
<svg class="abs" style="left:1555px;top:12px" width="19" height="16" viewBox="0 0 19 16"><path d="M1 5.500h3L8 2v12L4 10.500H1z" fill="none" stroke="#fff" stroke-width="1.100"/><path d="M10.500 5.500a3.500 3.500 0 0 1 0 5M12.800 3.500a6.300 6.300 0 0 1 0 9M15.200 1.500a9 9 0 0 1 0 13" fill="none" stroke="#fff" stroke-width="1.100"/></svg>
<svg class="abs" style="left:1580px;top:12px" width="17" height="17" viewBox="0 0 17 17"><path d="M.7.700h15.600v11.600H11l-2.500 3-2.500-3H.7z" fill="none" stroke="#fff" stroke-width="1.300"/><path d="M3.500 4h10M3.500 6.500h10M3.500 9h7" stroke="#fff" stroke-width="1.100"/></svg>
<div class="abs" style="left:1604px;top:4px;width:67px;text-align:center;font-size:12px;line-height:14px;color:#fff;letter-spacing:-.35px">21:49</div>
<div class="abs" style="left:1604px;top:21px;width:67px;text-align:center;font-size:12px;line-height:14px;color:#fff;letter-spacing:-.55px">19.02.2016</div>
<div class="abs" style="left:1675px;top:0;width:1px;height:40px;background:#6a6a66"></div>
</div>
</body>
</html>
